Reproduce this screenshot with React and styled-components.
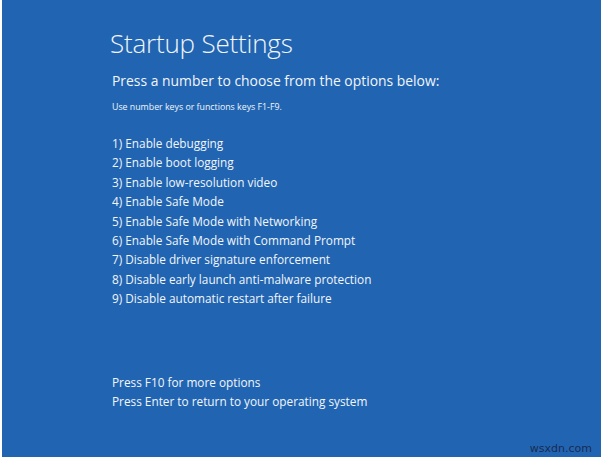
import React from "react";
import styled, { createGlobalStyle } from "styled-components";

const Global = createGlobalStyle`
  html, body {
    margin: 0;
    padding: 0;
    background: #ffffff;
  }
`;

const options = [
  "Enable debugging",
  "Enable boot logging",
  "Enable low-resolution video",
  "Enable Safe Mode",
  "Enable Safe Mode with Networking",
  "Enable Safe Mode with Command Prompt",
  "Disable driver signature enforcement",
  "Disable early launch anti-malware protection",
  "Disable automatic restart after failure",
];

function App() {
  return (
    <>
      <Global />
      <Screen>
        <Content>
          <Title>Startup Settings</Title>
          <Lead>Press a number to choose from the options below:</Lead>
          <Hint>Use number keys or functions keys F1-F9.</Hint>
          <OptionList>
            {options.map((text, i) => (
              <Option key={text}>
                {i + 1}) {text}
              </Option>
            ))}
          </OptionList>
          <Footer>
            <Option>Press F10 for more options</Option>
            <Option>Press Enter to return to your operating system</Option>
          </Footer>
        </Content>
        <Watermark>wsxdn.com</Watermark>
      </Screen>
    </>
  );
}

export default App;

const Screen = styled.div`
  width: 599px;
  height: 457px;
  margin-left: 2px;
  background-color: #2165b2;
  color: #f2f5fa;
  font-family: "Open Sans", "Noto Sans", sans-serif;
  display: flex;
  flex-direction: column;
  justify-content: space-between;
  box-sizing: border-box;
  padding: 26px 0 0 108px;
`;

const Content = styled.div`
  display: flex;
  flex-direction: column;
`;

const Title = styled.h1`
  margin: 0;
  font-size: 26px;
  font-weight: 300;
  line-height: 34px;
  letter-spacing: -0.2px;
`;

const Lead = styled.div`
  margin-top: 12px;
  padding-left: 2px;
  font-size: 13.9px;
  font-weight: 400;
  line-height: 18px;
`;

const Hint = styled.div`
  margin-top: 11px;
  padding-left: 2px;
  font-size: 8.8px;
  line-height: 12px;
`;

const OptionList = styled.div`
  margin-top: 21px;
  padding-left: 2px;
  display: flex;
  flex-direction: column;
`;

const Option = styled.div`
  font-size: 11.8px;
  line-height: 19.4px;
`;

const Footer = styled.div`
  margin-top: 64px;
  padding-left: 2px;
  display: flex;
  flex-direction: column;
`;

const Watermark = styled.div`
  align-self: flex-end;
  margin: 0 9px 1px 0;
  font-family: "DejaVu Sans", Verdana, sans-serif;
  font-size: 11px;
  color: #1a2b52;
  line-height: 14px;
`;
